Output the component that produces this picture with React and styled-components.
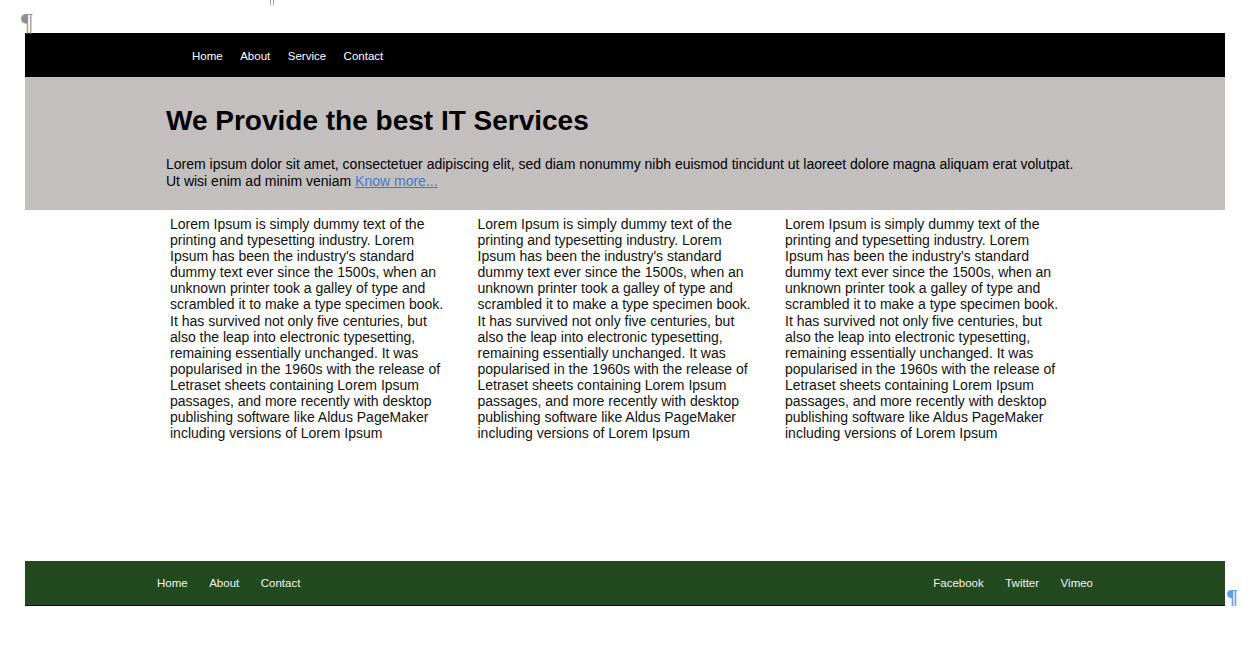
import React from 'react';
import styled, { createGlobalStyle } from 'styled-components';

const GlobalStyle = createGlobalStyle`
  html, body {
    margin: 0;
    padding: 0;
    background: #fff;
  }
  body {
    font-family: "Liberation Sans", Arial, sans-serif;
    color: #000;
  }
  * {
    box-sizing: border-box;
  }
`;

const Page = styled.div`
  padding-left: 25px;
  width: 1258px;
`;

const TopStrip = styled.div`
  position: relative;
  height: 33px;
  display: flex;
  align-items: flex-end;
`;

const Pilcrow = styled.span`
  font-family: "Liberation Serif", "Times New Roman", serif;
  font-size: ${(p) => p.size || 22}px;
  font-weight: ${(p) => (p.bold ? 'bold' : 'normal')};
  line-height: 1;
  color: ${(p) => p.color || '#8f8f8f'};
  margin-left: ${(p) => p.offset || 0}px;
  margin-bottom: ${(p) => p.lift || 0}px;
`;

// little double tick mark at the top edge
const TinyMark = styled.span`
  position: absolute;
  left: 245px;
  top: 0;
  width: 4px;
  height: 5px;
  border-left: 1px solid #a0a0a0;
  border-right: 1px solid #a0a0a0;
`;

const Nav = styled.nav`
  width: 1200px;
  height: 44px;
  background: #000;
  display: flex;
  align-items: center;
  gap: 17.5px;
  padding: 1px 0 0 167px;
`;

const NavLink = styled.a`
  color: #fff;
  font-size: 11.5px;
  text-decoration: none;
  cursor: pointer;
`;

const Hero = styled.section`
  width: 1200px;
  height: 133px;
  background: #c4bfbf;
  padding: 28px 141px 0 141px;

  h1 {
    margin: 0;
    font-size: 28px;
    font-weight: bold;
    line-height: 32px;
    color: #000;
  }

  p {
    margin: 19px 0 0 0;
    font-size: 14px;
    line-height: 16.6px;
    color: #000;
  }

  a {
    color: #3f78d4;
    text-decoration: underline;
  }
`;

const Main = styled.main`
  width: 1200px;
  height: 351px;
  padding: 6px 0 0 145px;
  display: grid;
  grid-template-columns: repeat(3, 280px);
  column-gap: 27.5px;
  align-items: start;
`;

const Column = styled.p`
  margin: 0;
  font-size: 14px;
  line-height: 16.1px;
  color: #111;
`;

const FooterRow = styled.div`
  display: flex;
  align-items: flex-end;
`;

const Footer = styled.footer`
  width: 1200px;
  height: 45px;
  background: #224a1e;
  border-bottom: 1px solid #0c0c0c;
  display: flex;
  align-items: center;
  justify-content: space-between;
  padding: 0 132px;
`;

const LinkGroup = styled.div`
  display: flex;
  gap: 21.5px;
`;

const FooterLink = styled.a`
  color: #f2f2f2;
  font-size: 11.5px;
  text-decoration: none;
  cursor: pointer;
`;

const lorem =
  "Lorem Ipsum is simply dummy text of the printing and typesetting industry. Lorem Ipsum has been the industry's standard dummy text ever since the 1500s, when an unknown printer took a galley of type and scrambled it to make a type specimen book. It has survived not only five centuries, but also the leap into electronic typesetting, remaining essentially unchanged. It was popularised in the 1960s with the release of Letraset sheets containing Lorem Ipsum passages, and more recently with desktop publishing software like Aldus PageMaker including versions of Lorem Ipsum";

const navItems = ['Home', 'About', 'Service', 'Contact'];
const footerLeft = ['Home', 'About', 'Contact'];
const footerRight = ['Facebook', 'Twitter', 'Vimeo'];

export default function App() {
  return (
    <>
      <GlobalStyle />
      <Page>
        <TopStrip>
          <Pilcrow size={26} offset={-4} lift={-3}>¶</Pilcrow>
          <TinyMark />
        </TopStrip>

        <Nav>
          {navItems.map((item) => (
            <NavLink key={item}>{item}</NavLink>
          ))}
        </Nav>

        <Hero>
          <h1>We Provide the best IT Services</h1>
          <p>
            Lorem ipsum dolor sit amet, consectetuer adipiscing elit, sed diam nonummy nibh euismod
            tincidunt ut laoreet dolore magna aliquam erat volutpat. Ut wisi enim ad minim veniam{' '}
            <a href="#">Know more...</a>
          </p>
        </Hero>

        <Main>
          <Column>{lorem}</Column>
          <Column>{lorem}</Column>
          <Column>{lorem}</Column>
        </Main>

        <FooterRow>
          <Footer>
            <LinkGroup>
              {footerLeft.map((item) => (
                <FooterLink key={item}>{item}</FooterLink>
              ))}
            </LinkGroup>
            <LinkGroup>
              {footerRight.map((item) => (
                <FooterLink key={item}>{item}</FooterLink>
              ))}
            </LinkGroup>
          </Footer>
          <Pilcrow size={22} bold color="#5c9ff0" offset={1} lift={-2}>¶</Pilcrow>
        </FooterRow>
      </Page>
    </>
  );
}
